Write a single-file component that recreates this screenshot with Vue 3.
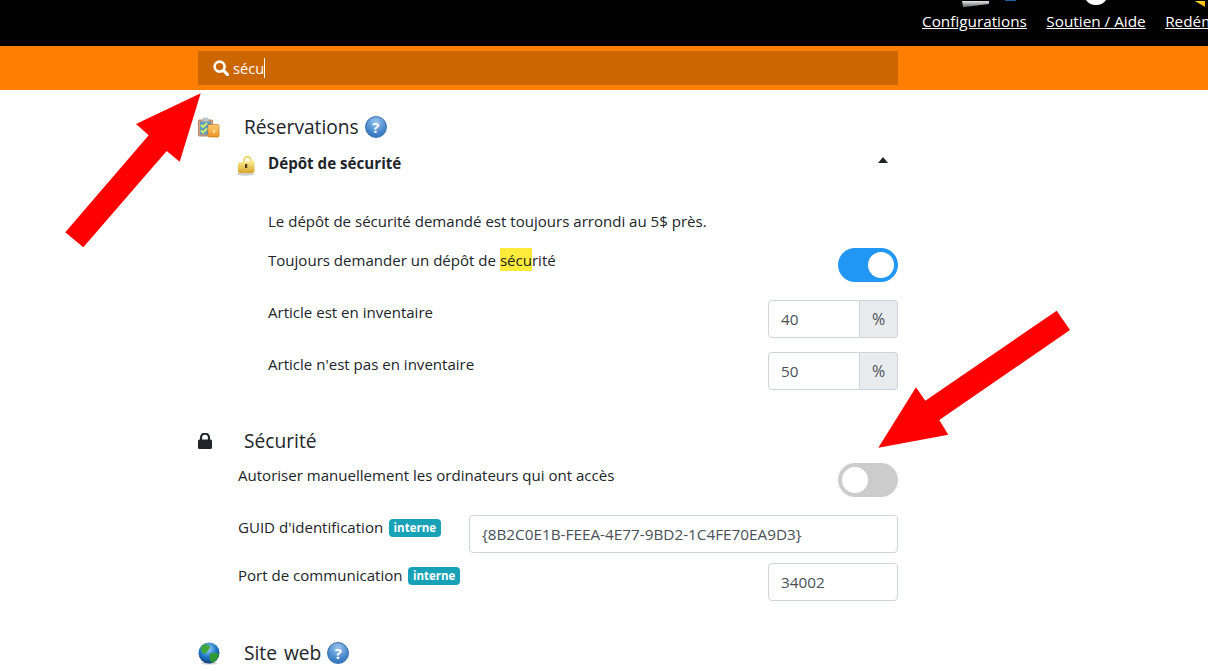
<template>
  <div class="page">
    <header class="topbar">
      <svg class="icon-strip" width="1208" height="8" viewBox="0 0 1208 8">
        <defs>
          <linearGradient id="stripGray" x1="0" y1="0" x2="0" y2="1">
            <stop offset="0" stop-color="#e6e8ea" />
            <stop offset="1" stop-color="#5f6468" />
          </linearGradient>
          <linearGradient id="stripYellow" x1="0" y1="0" x2="1" y2="1">
            <stop offset="0" stop-color="#ffe23a" />
            <stop offset="1" stop-color="#f5a800" />
          </linearGradient>
        </defs>
        <path d="M962 1 H989 V4 L965 7 H963 Z" fill="url(#stripGray)" />
        <rect x="1005" y="0" width="11" height="1" fill="#1d5f9e" />
        <path d="M1086 0 H1106 Q1103 5 1096 5 Q1089 5 1086 0 Z" fill="#fff" />
        <path d="M1195 1 H1205 V7 Z" fill="url(#stripYellow)" />
      </svg>
      <nav class="links">
        <a v-for="link in links" :key="link" href="#">{{ link }}</a>
      </nav>
    </header>

    <div class="searchbar">
      <div class="search">
        <svg class="search-icon" viewBox="0 0 16 16" width="16" height="16">
          <circle cx="6.6" cy="6.6" r="5" fill="none" stroke="#fff" stroke-width="2.6" />
          <path d="M10.4 10.4 L14.6 14.6" stroke="#fff" stroke-width="3.2" stroke-linecap="round" />
        </svg>
        <span>sécu</span><i class="caret"></i>
      </div>
    </div>

    <main class="content">
      <section>
        <h2 class="heading">
          <svg class="section-icon" width="22" height="21" viewBox="0 0 22 21">
            <defs>
              <linearGradient id="jar" x1="0" y1="0" x2="0" y2="1">
                <stop offset="0" stop-color="#ffd27a" />
                <stop offset="1" stop-color="#ee9426" />
              </linearGradient>
            </defs>
            <rect x="0.5" y="3" width="14" height="16" rx="1" fill="#d2a583" stroke="#a9714f" stroke-width="0.8" />
            <rect x="2" y="4.5" width="11" height="13" fill="#5b9cc0" />
            <rect x="4.5" y="0.5" width="6" height="4" rx="1" fill="#bcc4cc" />
            <path d="M3 8 L5 10 L9 6 M3 13.5 L5 15.5 L9 11.5" fill="none" stroke="#d6f06a" stroke-width="1.9" />
            <rect x="10" y="7.5" width="11" height="12.5" rx="1.5" fill="url(#jar)" stroke="#c9731b" stroke-width="0.7" />
            <rect x="10" y="9.5" width="11" height="2" fill="#f9bb5c" />
            <rect x="15" y="13" width="2" height="3" fill="#fbe3a6" />
          </svg>
          <span>Réservations</span>
          <span class="help">?</span>
        </h2>

        <div class="nested">
          <div class="group-title">
            <svg class="lock-gold" width="18" height="20" viewBox="0 0 18 20">
              <defs>
                <linearGradient id="gold" x1="0" y1="0" x2="0" y2="1">
                  <stop offset="0" stop-color="#fdf09a" />
                  <stop offset="1" stop-color="#d8a62a" />
                </linearGradient>
              </defs>
              <ellipse cx="8.5" cy="18.2" rx="8.5" ry="1.6" fill="#cfcfcf" />
              <path d="M7.2 6 V4 A3.3 3.3 0 0 1 13.8 4 V6" fill="none" stroke="#ecd671" stroke-width="2" />
              <path d="M1 6.5 L16.5 4.5 Q17.5 4.5 17.5 5.5 V15 Q17.5 17 15.5 17 H3 Q1 17 1 15.5 Z" fill="url(#gold)" />
              <rect x="8" y="8" width="2.2" height="4" fill="#4a3a12" />
            </svg>
            <strong>Dépôt de sécurité</strong>
            <i class="collapse"></i>
          </div>

          <p class="note">Le dépôt de sécurité demandé est toujours arrondi au 5$ près.</p>

          <div class="row row-toggle">
            <label>Toujours demander un dépôt de <mark>sécu</mark>rité</label>
            <span class="toggle on"></span>
          </div>
          <div v-for="field in stockFields" :key="field.label" class="row">
            <label>{{ field.label }}</label>
            <div class="input-group">
              <input type="text" :value="field.value" />
              <span class="addon">%</span>
            </div>
          </div>
        </div>
      </section>

      <section class="security">
        <h2 class="heading">
          <svg class="section-icon" width="14" height="16" viewBox="0 0 14 16">
            <path d="M3 7 V4.6 A4 4 0 0 1 11 4.6 V7" fill="none" stroke="#212529" stroke-width="2.2" />
            <rect x="0" y="6.5" width="14" height="9.5" rx="1.5" fill="#212529" />
          </svg>
          <span>Sécurité</span>
        </h2>
        <div class="fields">
          <div class="row row-toggle">
            <label>Autoriser manuellement les ordinateurs qui ont accès</label>
            <span class="toggle"></span>
          </div>
          <div class="row">
            <label>GUID d'identification <span class="badge">interne</span></label>
            <input class="wide" type="text" value="{8B2C0E1B-FEEA-4E77-9BD2-1C4FE70EA9D3}" />
          </div>
          <div class="row">
            <label>Port de communication <span class="badge">interne</span></label>
            <input class="port" type="text" value="34002" />
          </div>
        </div>
      </section>

      <section class="web">
        <h2 class="heading">
          <svg class="section-icon" width="22" height="23" viewBox="0 0 22 23">
            <defs>
              <radialGradient id="globe" cx="0.45" cy="0.3" r="0.8">
                <stop offset="0" stop-color="#9fd2f5" />
                <stop offset="0.5" stop-color="#1f78c8" />
                <stop offset="1" stop-color="#0a2c5e" />
              </radialGradient>
            </defs>
            <ellipse cx="11" cy="21" rx="8" ry="1.6" fill="#d4d4d4" />
            <circle cx="11" cy="11" r="10.5" fill="url(#globe)" />
            <path d="M4 3.5 Q8 1.5 11 3 Q13 6 10 8 Q9 12 5 11.5 Q1.5 8 4 3.5 Z" fill="#3fa63c" />
            <path d="M12 12 Q17 9.5 21 12 Q19.5 19 14 21 Q10.5 17 12 12 Z" fill="#2f9a35" />
          </svg>
          <span>Site web</span>
          <span class="help">?</span>
        </h2>
      </section>
    </main>

    <svg class="arrows" width="1208" height="671" viewBox="0 0 1208 671">
      <path d="M200.7 93.3 L136 124 L148.7 135.3 L65.3 232.3 L83.3 247.3 L166.7 151 L179.7 161.7 Z" fill="#f00" />
      <path d="M878.3 447.7 L948.3 434.7 L939.3 420 L1070 330 L1056.7 310.7 L925.3 400.7 L916 387.3 Z" fill="#f00" />
    </svg>
  </div>
</template>

<script setup>
const links = ['Configurations', 'Soutien / Aide', 'Redémarrer']

const stockFields = [
  { label: 'Article est en inventaire', value: '40' },
  { label: "Article n'est pas en inventaire", value: '50' },
]
</script>

<style>
html,
body {
  margin: 0;
  overflow: hidden;
  background: #fff;
}
</style>

<style scoped>
.page {
  position: relative;
  width: 1208px;
  height: 671px;
  overflow: hidden;
  font-family: "Open Sans", "Noto Sans", sans-serif;
  font-size: 15.05px;
  line-height: 24px;
  color: #212529;
}

/* Top black bar */
.topbar {
  height: 46px;
  background: #000;
}

.icon-strip {
  display: block;
}

.links {
  display: flex;
  gap: 19.5px;
  padding: 1px 0 0 922px;
  font-size: 15.3px;
  white-space: nowrap;
}

.links a {
  color: #fff;
  line-height: 24px;
  text-decoration: underline;
}

/* Search */
.searchbar {
  padding: 5px 0 5px 198px;
  background: #ff8000;
}

.search {
  display: flex;
  align-items: center;
  width: 700px;
  height: 34px;
  padding-left: 15px;
  box-sizing: border-box;
  background: #cc6600;
  color: #fff;
  font-size: 14.6px;
}

.search-icon {
  margin-right: 4px;
}

.caret {
  width: 1px;
  height: 20px;
  background: #fff;
}

/* Content */
.content {
  width: 700px;
  margin-left: 198px;
  padding-top: 22px;
}

.heading {
  display: flex;
  align-items: center;
  height: 30px;
  margin: 0;
  padding-left: 46px;
  position: relative;
  font-size: 19.2px;
  font-weight: 400;
  word-spacing: 2px;
}

.section-icon {
  position: absolute;
  left: 0;
}

.help {
  width: 22px;
  height: 22px;
  margin-left: 6px;
  border-radius: 50%;
  border: 1px solid #3a72ae;
  box-sizing: border-box;
  background: radial-gradient(circle at 50% 25%, #9cc6ee, #3f82c8 65%, #2f6fb2);
  color: #fff;
  font-size: 15px;
  font-weight: 700;
  line-height: 20px;
  text-align: center;
}

.nested {
  margin-top: 9px;
  padding-left: 70px;
}

.group-title {
  display: flex;
  align-items: center;
  position: relative;
  height: 24px;
}

.lock-gold {
  position: absolute;
  left: -31px;
  top: 5px;
}

.group-title strong {
  font-size: 15.15px;
}

.collapse {
  position: absolute;
  right: 10px;
  top: 6px;
  border-left: 5px solid transparent;
  border-right: 5px solid transparent;
  border-bottom: 6px solid #212529;
}

.note {
  margin: 34px 0 15px;
}

.row {
  display: flex;
  justify-content: space-between;
  align-items: flex-start;
  margin-bottom: 14px;
}

.row-toggle {
  margin-bottom: 18px;
}

mark {
  padding: 2px 0 1px;
  background: #ffeb3b;
  color: inherit;
}

.toggle {
  position: relative;
  width: 60px;
  height: 34px;
  border-radius: 17px;
  background: #ccc;
}

.toggle::after {
  content: "";
  position: absolute;
  left: 4px;
  top: 4px;
  width: 26px;
  height: 26px;
  border-radius: 50%;
  background: #fff;
}

.toggle.on {
  background: #2196f3;
}

.toggle.on::after {
  left: 30px;
}

.input-group {
  display: flex;
  width: 130px;
}

input {
  box-sizing: border-box;
  height: 38px;
  padding: 6px 12px;
  border: 1px solid #ced4da;
  border-radius: 4px;
  background: #fff;
  color: #495057;
  font: inherit;
  font-size: 15.3px;
  outline: none;
}

.input-group input {
  flex: 1;
  min-width: 0;
  border-radius: 4px 0 0 4px;
}

.addon {
  width: 38px;
  height: 38px;
  box-sizing: border-box;
  border: 1px solid #ced4da;
  border-left: 0;
  border-radius: 0 4px 4px 0;
  background: #e9ecef;
  color: #495057;
  font-size: 16px;
  line-height: 36px;
  text-align: center;
}

.security {
  margin-top: 36px;
}

.fields {
  margin-top: 7px;
  padding-left: 40px;
}

.security .row:not(.row-toggle) {
  margin-bottom: 10px;
}

.badge {
  display: inline-block;
  margin-left: 2px;
  padding: 0 4.5px;
  border-radius: 4px;
  background: #17a2b8;
  color: #fff;
  font-size: 11.5px;
  font-weight: 700;
  line-height: 18px;
  vertical-align: 1px;
}

.wide {
  width: 429px;
}

.port {
  width: 130px;
}

.web {
  margin-top: 37px;
}

.arrows {
  position: absolute;
  left: 0;
  top: 0;
  pointer-events: none;
}
</style>
